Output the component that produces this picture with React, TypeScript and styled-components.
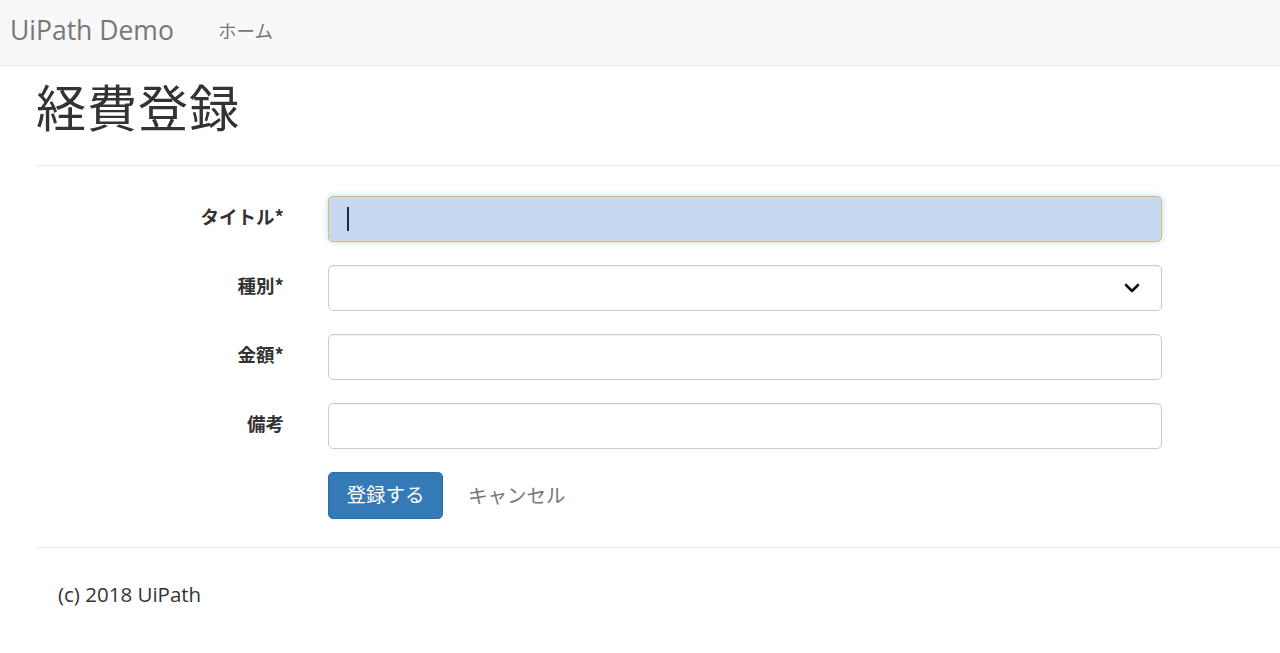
import React from 'react';
import styled, { createGlobalStyle } from 'styled-components';

const GlobalStyle = createGlobalStyle`
  html, body {
    margin: 0;
    padding: 0;
    background: #fff;
  }
  body {
    font-family: "Open Sans", "Noto Sans CJK JP", sans-serif;
    color: #333;
  }
`

const jp = `"Noto Sans CJK JP", "Open Sans", sans-serif`

const NavBar = styled.div`
  background: #f8f8f8;
  border-bottom: 1px solid #e7e7e7;
  display: flex;
  align-items: center;
  padding-bottom: 5px;
  height: 60px;
`

const Brand = styled.div`
  padding-left: 10px;
  font-size: 26.5px;
  color: #777;
  width: 218px;
  box-sizing: border-box;
`

const NavLink = styled.div`
  font-family: ${jp};
  font-size: 18.5px;
  color: #777;
`

const Main = styled.div`
  padding-left: 36px;
`

const Heading = styled.h1`
  margin: 0;
  height: 99px;
  box-sizing: border-box;
  padding-top: 3px;
  font-family: ${jp};
  font-weight: 400;
  font-size: 50px;
  line-height: 72px;
  color: #333;
  letter-spacing: 1px;
`

const Rule = styled.div`
  height: 1px;
  background: #eee;
`

const Form = styled.div`
  padding: 30px 0 28px 0;
  display: grid;
  grid-template-columns: 248px 834px;
  column-gap: 44px;
  row-gap: 23px;
`

const Label = styled.div`
  font-family: ${jp};
  font-weight: 700;
  font-size: 18.5px;
  text-align: right;
  line-height: 40px;
  color: #333;
`

const Field = styled.div<{ $focused?: boolean }>`
  position: relative;
  height: 46px;
  box-sizing: border-box;
  border: 1px solid ${p => (p.$focused ? '#c8b98f' : '#ccc')};
  border-radius: 5px;
  background: ${p => (p.$focused ? '#c6d8ef' : '#fff')};
  box-shadow: ${p => (p.$focused ? '0 0 6px rgba(102, 175, 233, 0.45), inset 0 0 0 1px #e4dbbd' : 'inset 0 1px 1px rgba(0,0,0,0.05)')};
  display: flex;
  align-items: center;
`

const Caret = styled.div`
  margin-left: 18px;
  width: 2px;
  height: 24px;
  background: #1c2a44;
`

const Chevron = styled.svg`
  position: absolute;
  right: 20px;
  top: 15px;
`

const Actions = styled.div`
  display: flex;
  align-items: center;
  gap: 25px;
`

const PrimaryButton = styled.button`
  width: 115px;
  height: 47px;
  border: 1px solid #2e6da4;
  border-radius: 5px;
  background: #337ab7;
  color: #fff;
  font-family: ${jp};
  font-size: 19.5px;
  line-height: 40px;
  padding: 0 0 3px 0;
`

const CancelLink = styled.span`
  font-family: ${jp};
  font-size: 19.5px;
  color: #777;
  margin-top: -3px;
`

const Footer = styled.div`
  padding: 32px 0 0 22px;
  font-size: 20.5px;
  color: #333;
`

const fields: { label: string, focused?: boolean, select?: boolean }[] = [
  { label: 'タイトル*', focused: true },
  { label: '種別*', select: true },
  { label: '金額*' },
  { label: '備考' },
]

const App: React.FC = () => (
  <>
    <GlobalStyle />
    <NavBar>
      <Brand>UiPath Demo</Brand>
      <NavLink>ホーム</NavLink>
    </NavBar>
    <Main>
      <Heading>経費登録</Heading>
      <Rule />
      <Form>
        {fields.map(f => (
          <React.Fragment key={f.label}>
            <Label>{f.label}</Label>
            <Field $focused={f.focused}>
              {f.focused && <Caret />}
              {f.select && (
                <Chevron width="18" height="14" viewBox="0 0 18 14">
                  <path d="M3 4 L9 10 L15 4" fill="none" stroke="#111" strokeWidth="2.6" strokeLinecap="round" strokeLinejoin="round" />
                </Chevron>
              )}
            </Field>
          </React.Fragment>
        ))}
        <div />
        <Actions>
          <PrimaryButton>登録する</PrimaryButton>
          <CancelLink>キャンセル</CancelLink>
        </Actions>
      </Form>
      <Rule />
      <Footer>(c) 2018 UiPath</Footer>
    </Main>
  </>
)

export default App
